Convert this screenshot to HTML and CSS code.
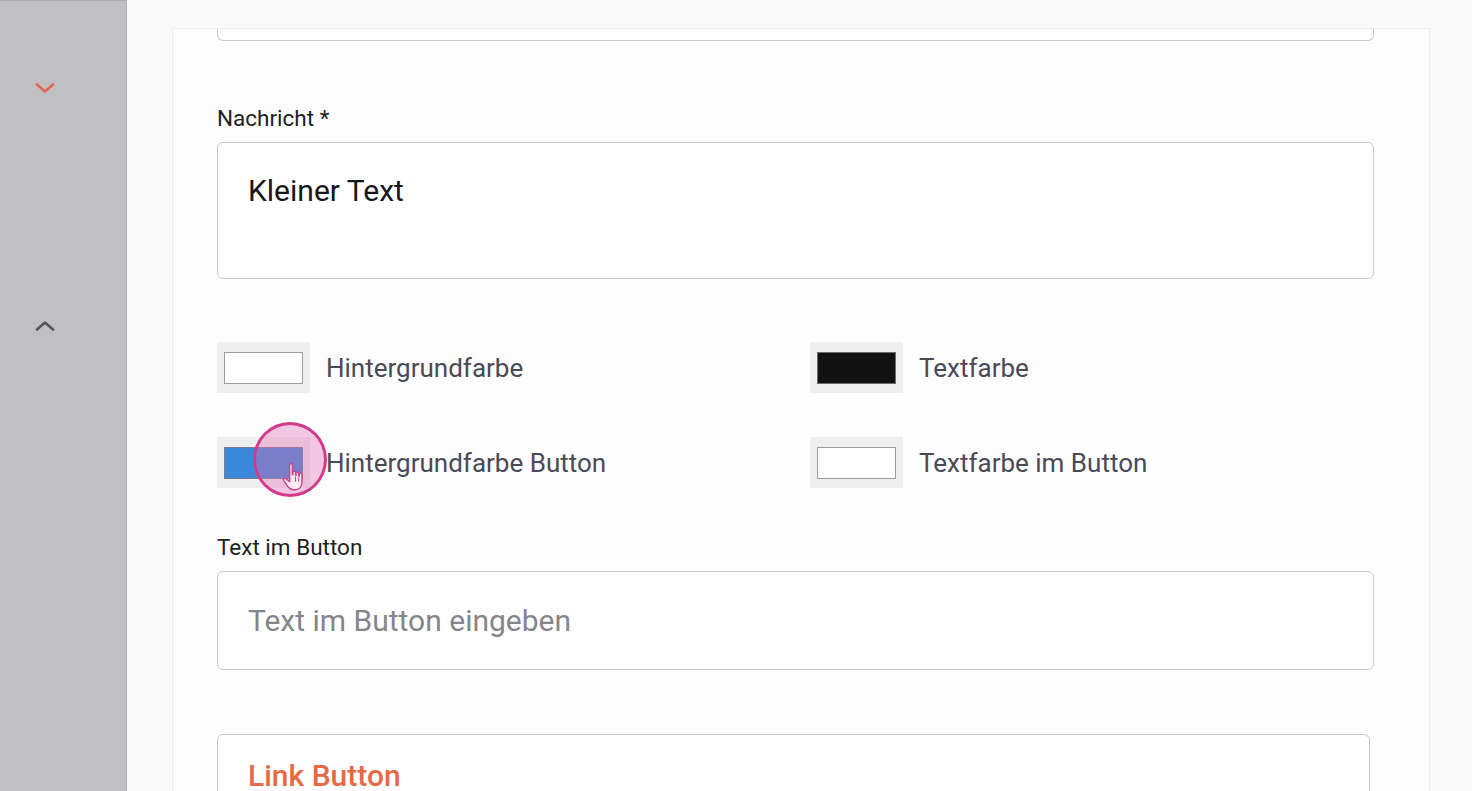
FILE: index.html
```html
<!DOCTYPE html>
<html lang="de">
<head>
<meta charset="utf-8">
<title>Formular</title>
<link rel="stylesheet" href="styles.css">
</head>
<body>
<div class="app">
  <aside class="sidebar">
    <div class="chev chev-down">
      <svg width="22" height="12" viewBox="0 0 22 12"><path d="M3 2.5 L11 9.5 L19 2.5" fill="none" stroke="#e2674e" stroke-width="2.6" stroke-linecap="round" stroke-linejoin="round"/></svg>
    </div>
    <div class="chev chev-up">
      <svg width="22" height="12" viewBox="0 0 22 12"><path d="M3 9.5 L11 2.5 L19 9.5" fill="none" stroke="#54545e" stroke-width="2.6" stroke-linecap="round" stroke-linejoin="round"/></svg>
    </div>
  </aside>
  <main class="main">
    <div class="card">
      <div class="input-tail"></div>

      <label class="field-label label-msg">Nachricht *</label>
      <div class="textarea">Kleiner Text</div>

      <div class="colors">
        <div class="color-item">
          <span class="swatch"><span class="swatch-inner sw-white"></span></span>
          <span class="color-label">Hintergrundfarbe</span>
        </div>
        <div class="color-item">
          <span class="swatch"><span class="swatch-inner sw-black"></span></span>
          <span class="color-label">Textfarbe</span>
        </div>
        <div class="color-item">
          <span class="swatch"><span class="swatch-inner sw-blue"></span></span>
          <span class="color-label">Hintergrundfarbe Button</span>
          <span class="cursor-ring">
            <svg class="hand" width="28" height="32" viewBox="0 0 26 30">
              <path d="M8 3.5 C8 2 10.5 2 10.5 3.5 L10.5 13 L11 13 L11 10.5 C11 9 13.5 9 13.5 10.5 L13.5 13.5 L14 13.5 L14 11.5 C14 10 16.5 10 16.5 11.5 L16.5 14 L17 14 L17 12.5 C17 11 19.5 11 19.5 12.5 L19.5 20 C19.5 24 17 27 13.5 27 L11.5 27 C9 27 7.5 25.5 6 23.5 L2.5 18.5 C1.5 17 3 15.5 4.5 16.5 L8 19.5 Z" fill="#fbeaf3" stroke="#c8438a" stroke-width="1.3" stroke-linejoin="round"/>
              <path d="M13.5 15 L13.5 19 M16.5 15.5 L16.5 19" stroke="#c8438a" stroke-width="1" stroke-linecap="round"/>
            </svg>
          </span>
        </div>
        <div class="color-item">
          <span class="swatch"><span class="swatch-inner sw-white"></span></span>
          <span class="color-label">Textfarbe im Button</span>
        </div>
      </div>

      <label class="field-label label-btn">Text im Button</label>
      <div class="input"><span class="placeholder">Text im Button eingeben</span></div>

      <div class="link-box">
        <span class="link-title">Link Button</span>
      </div>
    </div>
  </main>
</div>
</body>
</html>
```

FILE: styles.css
```css
* { box-sizing: border-box; }

html, body {
  margin: 0;
  padding: 0;
  height: 791px;
  overflow: hidden;
  font-family: Roboto, "Noto Sans", "Liberation Sans", sans-serif;
}

.app {
  display: flex;
  height: 791px;
}

.sidebar {
  width: 127px;
  flex: none;
  background: #c0c0c3;
  border-right: 1px solid #b3b3b6;
  border-top: 1px solid #aeaeb1;
  display: flex;
  flex-direction: column;
  align-items: center;
  padding-top: 81px;
}

.chev {
  width: 22px;
  height: 12px;
  display: flex;
  margin-right: 37px;
}

.chev svg { display: block; }

.chev-up { margin-top: 226px; }

.main {
  flex: 1;
  background: #f9f9f9;
  padding: 28px 42px 0 45px;
}

.card {
  position: relative;
  height: 100%;
  background: #fdfdfd;
  border: 1px solid #ececec;
  border-bottom: none;
  padding: 0 55px 0 44px;
}

.input-tail {
  height: 12px;
  border: 1px solid #c9c9c9;
  border-top: none;
  border-radius: 0 0 6px 6px;
  background: #fff;
}

.field-label {
  display: block;
  font-size: 22.5px;
  line-height: 26px;
  color: #1f1f24;
}

.label-msg { margin-top: 64px; margin-bottom: 11px; }

.textarea {
  height: 137px;
  border: 1px solid #c9c9c9;
  border-radius: 6px;
  background: #fff;
  padding: 30px 30px;
  font-size: 30px;
  line-height: 36px;
  color: #17171b;
}

.colors {
  display: grid;
  grid-template-columns: 1fr 1fr;
  column-gap: 29px;
  row-gap: 44px;
  margin-top: 63px;
}

.color-item {
  position: relative;
  display: flex;
  align-items: center;
  gap: 16px;
  height: 51px;
}

.swatch {
  width: 93px;
  height: 51px;
  flex: none;
  background: #efefef;
  display: flex;
  align-items: center;
  justify-content: center;
}

.swatch-inner {
  width: 79px;
  height: 32px;
  border: 1px solid #9a9a9e;
}

.sw-white { background: #fff; }
.sw-black { background: #111112; border-color: #6a6a70; }
.sw-blue { background: #3a88d9; border-color: #7a7a90; }

.color-label {
  font-size: 26px;
  line-height: 30px;
  color: #4a4a56;
  padding-top: 1px;
}

.cursor-ring {
  position: absolute;
  left: 36px;
  top: -15px;
  width: 74px;
  height: 75px;
  border-radius: 50%;
  border: 3px solid #d23b8b;
  background: rgba(226, 110, 180, 0.38);
}

.hand {
  position: absolute;
  left: 25px;
  top: 36px;
}

.label-btn { margin-top: 46px; margin-bottom: 11px; }

.input {
  height: 99px;
  border: 1px solid #c9c9c9;
  border-radius: 6px;
  background: #fff;
  display: flex;
  align-items: center;
  padding: 0 30px;
}

.placeholder {
  font-size: 30px;
  color: #85858c;
}

.link-box {
  margin-top: 64px;
  margin-right: 4px;
  height: 120px;
  border: 1px solid #c9c9c9;
  border-bottom: none;
  border-radius: 6px 6px 0 0;
  background: #fff;
  padding: 27px 30px 0;
}

.link-title {
  display: block;
  font-size: 30px;
  line-height: 28px;
  font-weight: 500;
  color: #e66a48;
}
```
